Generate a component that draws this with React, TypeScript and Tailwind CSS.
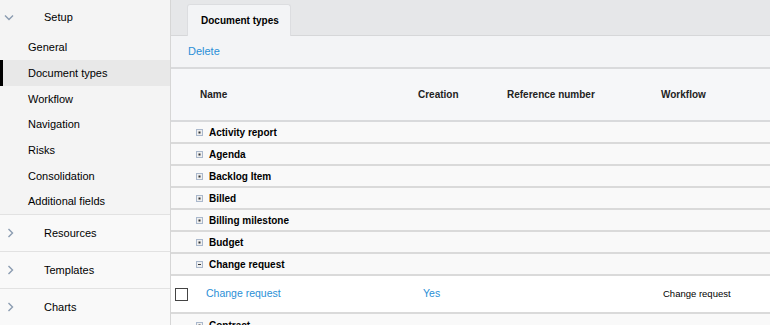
import React from "react";

const font = { fontFamily: '"Liberation Sans", Arial, sans-serif' };

function ChevronDown() {
  return (
    <svg width="10" height="7" viewBox="0 0 10 7" className="block">
      <path d="M1 1.5 L5 5.5 L9 1.5" fill="none" stroke="#8a9bb0" strokeWidth="1.4" />
    </svg>
  );
}
function ChevronRight() {
  return (
    <svg width="7" height="10" viewBox="0 0 7 10" className="block">
      <path d="M1.5 1 L5.5 5 L1.5 9" fill="none" stroke="#8a9bb0" strokeWidth="1.4" />
    </svg>
  );
}
function Expander({ open }: { open?: boolean }) {
  return (
    <svg width="7" height="7" viewBox="0 0 7 7" className="block">
      <rect x="0.5" y="0.5" width="6" height="6" fill="#f0f0f0" stroke="#aab8cc" />
      {open ? (
        <rect x="2" y="3" width="3" height="1" fill="#333" />
      ) : (
        <rect x="2.5" y="2.5" width="2" height="2" fill="#333" />
      )}
    </svg>
  );
}

const subItems: [string, string][] = [
  ["General", "h-[26px]"],
  ["Document types", "h-[26px]"],
  ["Workflow", "h-[26px]"],
  ["Navigation", "h-[25px]"],
  ["Risks", "h-[26px]"],
  ["Consolidation", "h-[26px]"],
  ["Additional fields", "h-[25px]"],
];
const groups = ["Activity report", "Agenda", "Backlog Item", "Billed", "Billing milestone", "Budget"];

export default function App() {
  return (
    <div className="flex w-[770px] h-[325px] overflow-hidden text-[11px] text-black bg-white" style={font}>
      <aside className="w-[171px] shrink-0 bg-[#f4f4f4] border-r border-[#d6d6d6] flex flex-col">
        <div className="h-[34px] flex items-center">
          <div className="w-[44px] pl-[4px]"><ChevronDown /></div>
          <span>Setup</span>
        </div>
        <div className="flex flex-col">
          {subItems.map(([s, h]) =>
            s === "Document types" ? (
              <div key={s} className={h + " flex items-center pl-[25px] bg-[#e8e8e8] border-l-[3px] border-black"}>
                {s}
              </div>
            ) : (
              <div key={s} className={h + " flex items-center pl-[28px]"}>
                {s}
              </div>
            )
          )}
        </div>
        {["Resources", "Templates", "Charts"].map((s) => (
          <div key={s} className="h-[37px] flex items-center border-t border-[#e2e2e2] bg-[#f9f9f9] shrink-0">
            <div className="w-[44px] pl-[7px]"><ChevronRight /></div>
            <span>{s}</span>
          </div>
        ))}
      </aside>
      <main className="flex-1 flex flex-col min-w-0 bg-[#f9f9f9]">
        <div className="h-[36px] bg-[#e6e7e9] border-b border-[#d6d7d9] flex items-end pl-[16px] shrink-0">
          <div className="h-[32px] w-[104px] pl-[13px] flex items-center bg-[#f3f4f6] border border-b-0 border-[#dcdde0] rounded-t-[3px] font-bold text-[10px] -mb-px">
            Document types
          </div>
        </div>
        <div className="h-[33px] bg-[#f3f4f6] border-b-2 border-[#d9dadc] flex items-center pl-[17px] shrink-0">
          <span className="text-[#2a8fd6]">Delete</span>
        </div>
        <div className="h-[53px] bg-[#f6f7f9] border-b-2 border-[#d9dadc] flex items-center font-bold text-[10px] text-[#222] shrink-0">
          <span className="w-[247px] pl-[29px]">Name</span>
          <span className="w-[89px]">Creation</span>
          <span className="w-[154px]">Reference number</span>
          <span>Workflow</span>
        </div>
        {groups.map((g) => (
          <div key={g} className="h-[22px] border-b-2 border-[#dadada] flex items-center shrink-0">
            <div className="w-[38px] pl-[25px]"><Expander /></div>
            <span className="font-bold text-[10px]">{g}</span>
          </div>
        ))}
        <div className="h-[22px] border-b-2 border-[#dadada] flex items-center shrink-0">
          <div className="w-[38px] pl-[25px]"><Expander open /></div>
          <span className="font-bold text-[10px]">Change request</span>
        </div>
        <div className="h-[38px] bg-white border-b-2 border-[#dadada] flex items-center shrink-0">
          <div className="w-[35px] pl-[4px]">
            <div className="w-[13px] h-[13px] border border-[#444] bg-white" />
          </div>
          <span className="w-[217px] text-[10.5px] text-[#2a8fd6]">Change request</span>
          <span className="w-[240px] text-[10.5px] text-[#2a8fd6]">Yes</span>
          <span className="text-[9.5px]">Change request</span>
        </div>
        <div className="h-[22px] flex items-center shrink-0">
          <div className="w-[38px] pl-[25px]"><Expander /></div>
          <span className="font-bold text-[10px]">Contract</span>
        </div>
      </main>
    </div>
  );
}
